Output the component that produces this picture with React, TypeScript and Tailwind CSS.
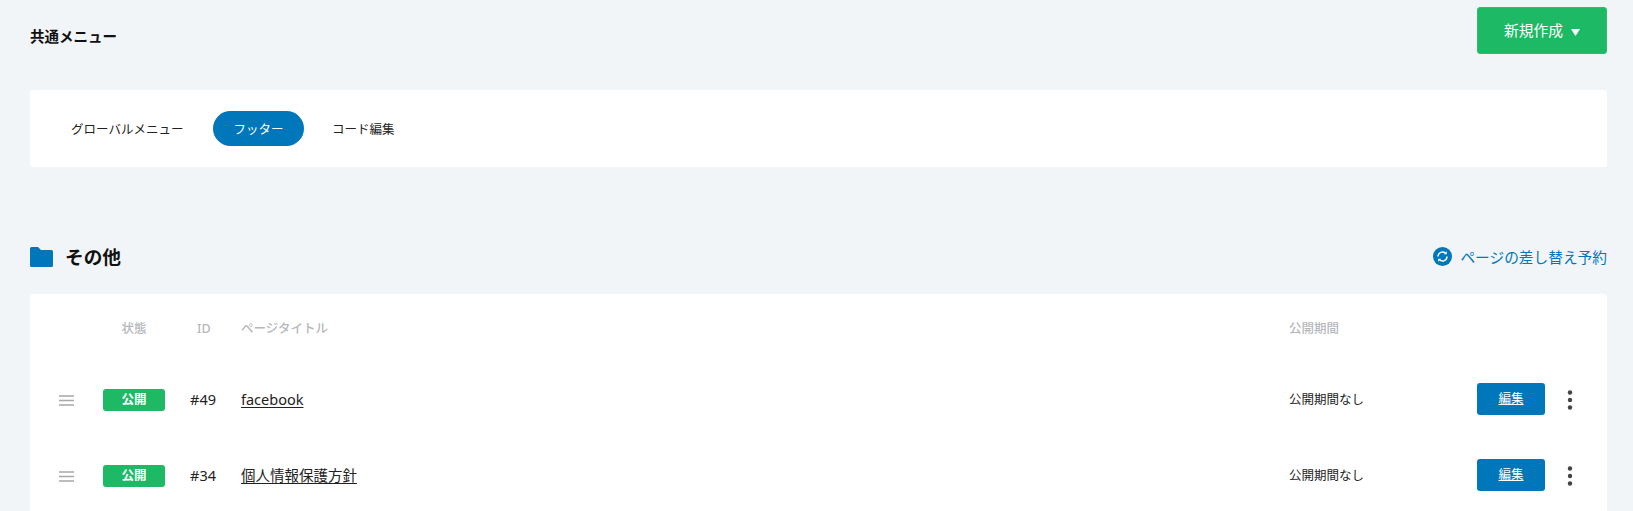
import React from "react";

const font = { fontFamily: '"Noto Sans", "Noto Sans CJK JP", sans-serif' };

function Row({ id, title }: { id: string; title: string }) {
  return (
    <div className="flex h-[76px] items-center text-[14.5px] text-[#222]">
      <div className="flex w-[30px] justify-start">
        <svg width="15" height="11" viewBox="0 0 15 11" className="text-[#a8a8a8]">
          <path d="M0 1h15M0 5.500h15M0 10h15" stroke="currentColor" strokeWidth="1.300" fill="none" />
        </svg>
      </div>
      <div className="ml-[14px] flex h-[22px] w-[62px] items-center justify-center rounded-[3px] bg-[#1eb964] text-[12.5px] font-bold text-white">
        公開
      </div>
      <div className="ml-[25px] w-[51px]">#{id}</div>
      <div className="w-[1048px]">
        <a className="underline underline-offset-2" href="#">
          {title}
        </a>
      </div>
      <div className="w-[188px] text-[12.5px]">公開期間なし</div>
      <a href="#" className="mt-[-2px] flex h-[32px] w-[68px] items-center justify-center rounded-[3px] bg-[#0077bb] text-[12.5px] text-white underline">
        編集
      </a>
      <svg width="6" height="20" viewBox="0 0 6 20" className="ml-[22px] text-[#444]">
        <circle cx="3" cy="2.500" r="2.200" fill="currentColor" />
        <circle cx="3" cy="10" r="2.200" fill="currentColor" />
        <circle cx="3" cy="17.500" r="2.200" fill="currentColor" />
      </svg>
    </div>
  );
}

export default function App() {
  return (
    <div className="h-[511px] overflow-hidden bg-[#f2f5f8] pl-[30px] pr-[26px] text-[#111]" style={font}>
      <div className="flex items-start justify-between pt-[7px]">
        <h1 className="mt-[18px] text-[14.5px] font-bold leading-[22px]">共通メニュー</h1>
        <button className="flex h-[47px] w-[130px] items-center justify-center gap-[8px] rounded-[3px] border border-[#2bbf6e] bg-[#1eb964] text-[14.750px] text-white">
          新規作成
          <svg width="9" height="7" viewBox="0 0 9 7" className="mt-[4px]">
            <path d="M0 0h9L4.500 7z" fill="currentColor" />
          </svg>
        </button>
      </div>

      <div className="mt-[36px] flex h-[77px] items-center rounded-[3px] bg-white pl-[41px] text-[12.5px] text-[#222]">
        <span className="w-[113px] whitespace-nowrap pt-[4px]">グローバルメニュー</span>
        <span className="ml-[29px] flex h-[35px] w-[91px] items-center justify-center rounded-full bg-[#0077bb] pt-[3px] text-white">
          フッター
        </span>
        <span className="ml-[28px] pt-[4px]">コード編集</span>
      </div>

      <div className="mt-[76px] flex items-center justify-between">
        <div className="flex items-center gap-[12px]">
          <svg width="23" height="20" viewBox="0 0 23 20" className="text-[#0077bb]">
            <path d="M1.500 0h6.500l3 3h10.500a1.500 1.500 0 0 1 1.500 1.500v14a1.500 1.500 0 0 1-1.500 1.500h-20A1.500 1.500 0 0 1 0 18.500V1.500A1.500 1.500 0 0 1 1.500 0z" fill="currentColor" />
          </svg>
          <h2 className="text-[18.7px] font-bold leading-[28px]">その他</h2>
        </div>
        <a href="#" className="flex items-center gap-[8px] text-[14.7px] text-[#0077bb]">
          <svg width="19" height="19" viewBox="0 0 19 19">
            <circle cx="9.500" cy="9.500" r="9.500" fill="#0077bb" />
            <path d="M5 9.500a4.500 4.500 0 0 1 7.500-3.300M14 9.500a4.500 4.500 0 0 1-7.500 3.300" stroke="#fff" strokeWidth="1.500" fill="none" />
            <path d="M13.800 4.300v3h-3zM5.200 14.700v-3h3z" fill="#fff" />
          </svg>
          <span className="pt-[1px]">ページの差し替え予約</span>
        </a>
      </div>

      <div className="mt-[23px] rounded-[3px] bg-white pl-[29px] pr-[32px]">
        <div className="flex h-[68px] items-center pt-[3px] text-[12.5px] font-medium text-[#b5b8bd]">
          <div className="ml-[44px] w-[62px] text-center">状態</div>
          <div className="ml-[25px] w-[51px] pl-[7px]">ID</div>
          <div className="w-[1048px]">ページタイトル</div>
          <div>公開期間</div>
        </div>
        <Row id="49" title="facebook" />
        <Row id="34" title="個人情報保護方針" />
      </div>
    </div>
  );
}
